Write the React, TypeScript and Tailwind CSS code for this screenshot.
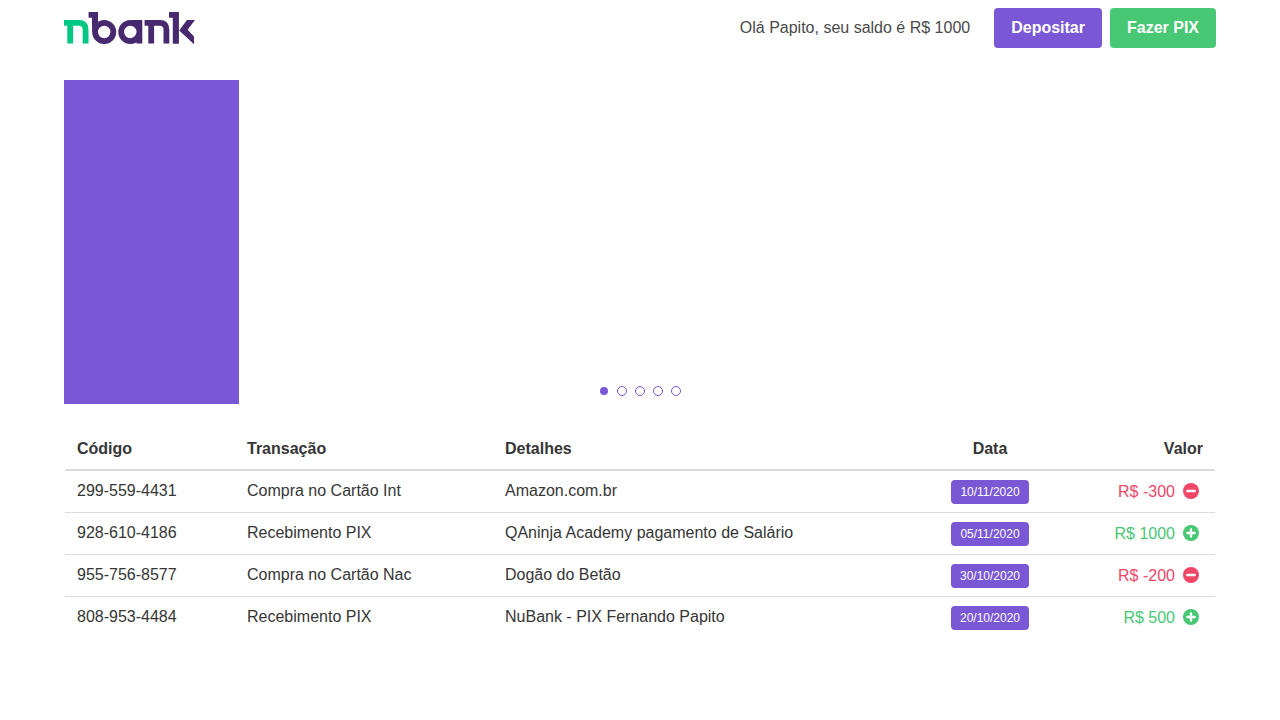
import { useState } from "react";

type Transaction = {
  code: string;
  kind: string;
  details: string;
  date: string;
  amount: number;
};

const transactions: Transaction[] = [
  { code: "299-559-4431", kind: "Compra no Cartão Int", details: "Amazon.com.br", date: "10/11/2020", amount: -300 },
  { code: "928-610-4186", kind: "Recebimento PIX", details: "QAninja Academy pagamento de Salário", date: "05/11/2020", amount: 1000 },
  { code: "955-756-8577", kind: "Compra no Cartão Nac", details: "Dogão do Betão", date: "30/10/2020", amount: -200 },
  { code: "808-953-4484", kind: "Recebimento PIX", details: "NuBank - PIX Fernando Papito", date: "20/10/2020", amount: 500 },
];

function Logo() {
  return (
    <svg width="131" height="33" viewBox="0 0 131 33" fill="none" role="img" aria-label="nbank">
      <g stroke="#00c781" strokeWidth="5.8">
        <path d="M0 10.9H15C19.5 10.9 21.6 13.4 21.6 17.5V31.6M6.2 10.9V31.6" />
      </g>
      <g stroke="#46296e" strokeWidth="5.8">
        <path d="M24.6 2.9H31V20" />
        <circle cx="40.2" cy="20" r="9.1" />
        <path d="M75.4 20A9.1 9.1 0 1 0 66.3 29.1M66.3 10.9H75.4V31.6M66.3 29.1C71.3 29.1 75.4 25 75.4 20" />
        <path d="M80.6 10.9H95.8C100.3 10.9 102.4 13.4 102.4 17.5V31.6M87.2 10.9V31.6" />
        <path d="M105 2.9H111.8V31.6" />
      </g>
      <path fill="#46296e" d="M28.1 0H33.9V15H28.1zM108.9 0H114.7V31.6H108.9zM123 8H131L123.6 17.8L130 24.4V32.2L115.2 18.6z" />
    </svg>
  );
}

function AmountIcon({ positive }: { positive: boolean }) {
  return (
    <svg className="size-4" viewBox="0 0 16 16" aria-hidden="true">
      <circle cx="8" cy="8" r="8" fill="currentColor" />
      <path
        d={positive ? "M4.4 8H11.6M8 4.4V11.6" : "M4.3 8H11.7"}
        stroke="white"
        strokeWidth="2.4"
        strokeLinecap="round"
      />
    </svg>
  );
}

function Carousel() {
  const [active, setActive] = useState(0);
  return (
    <section aria-label="Destaques" className="relative h-[324px]">
      <div className="h-full w-[175px] bg-[#7957d5]" />
      <div className="absolute inset-x-0 bottom-2 flex justify-center gap-2">
        {[0, 1, 2, 3, 4].map((slide) => (
          <button
            key={slide}
            type="button"
            aria-label={`Slide ${slide + 1}`}
            onClick={() => setActive(slide)}
            className="flex size-2.5 items-center justify-center"
          >
            <span
              className={
                slide === active
                  ? "size-2 rounded-full bg-[#7957d5]"
                  : "size-2.5 rounded-full border border-[#7957d5] bg-white"
              }
            />
          </button>
        ))}
      </div>
    </section>
  );
}

export default function App() {
  return (
    <div className="min-h-screen bg-white px-16 font-['Liberation_Sans',Arial,sans-serif] text-base text-[#363636]">
      <header className="flex items-center justify-between py-2">
        <a href="#">
          <Logo />
        </a>
        <div className="flex items-center">
          <p className="mr-6 text-[#4a4a4a]">Olá Papito, seu saldo é R$ 1000</p>
          <div className="flex gap-2">
            <button type="button" className="h-10 rounded bg-[#7957d5] px-[17px] font-bold text-white">
              Depositar
            </button>
            <button type="button" className="h-10 rounded bg-[#48c774] px-[17px] font-bold text-white">
              Fazer PIX
            </button>
          </div>
        </div>
      </header>
      <main className="pt-6">
        <Carousel />
        <div className="mt-6 border border-transparent">
          <table className="w-full border-separate border-spacing-0">
            <thead>
              <tr className="text-left *:border-b-2 *:border-[#dbdbdb] *:px-3 *:py-2 *:font-bold">
                <th scope="col" className="w-[170px]">Código</th>
                <th scope="col" className="w-[258px]">Transação</th>
                <th scope="col">Detalhes</th>
                <th scope="col" className="w-[110px] text-center">Data</th>
                <th scope="col" className="w-[170px] text-right">Valor</th>
              </tr>
            </thead>
            <tbody>
              {transactions.map((t) => (
                <tr
                  key={t.code}
                  className="align-top *:border-b *:border-[#dbdbdb] *:px-3 *:pb-2 last:*:border-b-0"
                >
                  <td className="pt-2">{t.code}</td>
                  <td className="pt-2">{t.kind}</td>
                  <td className="pt-2">{t.details}</td>
                  <td className="pt-[9px]">
                    <div className="flex justify-center">
                      <span className="flex h-6 items-center rounded bg-[#7957d5] px-[9px] text-xs text-white">
                        {t.date}
                      </span>
                    </div>
                  </td>
                  <td className="pt-[9px]">
                    <div
                      className={
                        t.amount > 0
                          ? "flex items-center justify-end gap-2 pr-1 text-[#48c774]"
                          : "flex items-center justify-end gap-2 pr-1 text-[#f14668]"
                      }
                    >
                      <span>R$ {t.amount}</span>
                      <span className="pb-0.5">
                        <AmountIcon positive={t.amount > 0} />
                      </span>
                    </div>
                  </td>
                </tr>
              ))}
            </tbody>
          </table>
        </div>
      </main>
    </div>
  );
}
